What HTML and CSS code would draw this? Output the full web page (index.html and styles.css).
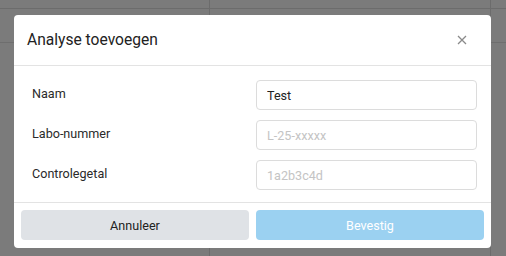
FILE: index.html
```html
<!DOCTYPE html>
<html lang="nl">
<head>
<meta charset="utf-8">
<title>Analyse toevoegen</title>
<link rel="stylesheet" href="styles.css">
</head>
<body>
<div class="backdrop">
  <div class="modal">
    <div class="modal-header">
      <h2 class="modal-title">Analyse toevoegen</h2>
      <button class="close" type="button" aria-label="Sluiten">
        <svg width="10" height="10" viewBox="0 0 10 10"><path d="M1 1L9 9M9 1L1 9" stroke="#8a8a8a" stroke-width="1.3" fill="none"/></svg>
      </button>
    </div>
    <div class="modal-body">
      <label class="label" for="naam">Naam</label>
      <input class="input" id="naam" type="text" value="Test">
      <label class="label" for="labo">Labo-nummer</label>
      <input class="input" id="labo" type="text" placeholder="L-25-xxxxx">
      <label class="label" for="ctrl">Controlegetal</label>
      <input class="input" id="ctrl" type="text" placeholder="1a2b3c4d">
    </div>
    <div class="modal-footer">
      <button class="btn btn-cancel" type="button">Annuleer</button>
      <button class="btn btn-confirm" type="button">Bevestig</button>
    </div>
  </div>
</div>
</body>
</html>
```

FILE: styles.css
```css
html, body {
  margin: 0;
  padding: 0;
}
body {
  width: 506px;
  height: 256px;
  overflow: hidden;
  font-family: Roboto, "Liberation Sans", sans-serif;
  background-color: #7b7b7b;
  background-image:
    linear-gradient(to bottom, transparent 8px, #6c6c6c 8px, #6c6c6c 9px, transparent 9px),
    linear-gradient(to bottom, transparent 42px, #6e6e6e 42px, #6e6e6e 43px, transparent 43px),
    linear-gradient(to right, transparent 209px, #6c6c6c 209px, #6c6c6c 210px, transparent 210px),
    linear-gradient(to right, transparent 490px, #6c6c6c 490px, #6c6c6c 491px, transparent 491px);
}
.backdrop {
  padding: 15px 15px 0 14px;
}
.modal {
  width: 477px;
  height: 233px;
  background: #fff;
  border-radius: 4px;
  display: flex;
  flex-direction: column;
  box-sizing: border-box;
}
.modal-header {
  height: 51px;
  box-sizing: border-box;
  border-bottom: 1px solid #e3e3e3;
  display: flex;
  align-items: center;
  justify-content: space-between;
  padding: 0 24px 0 13px;
}
.modal-title {
  margin: 0;
  font-size: 15.6px;
  font-weight: 400;
  color: #222;
}
.close {
  border: 0;
  background: none;
  padding: 0;
  width: 10px;
  height: 10px;
  display: flex;
}
.modal-body {
  height: 137px;
  box-sizing: border-box;
  padding: 14px 14px 13px 14px;
  display: grid;
  grid-template-columns: 221px 221px;
  column-gap: 7px;
  row-gap: 10px;
  grid-auto-rows: 30px;
  border-bottom: 1px solid #e3e3e3;
}
.label {
  font-size: 12.6px;
  color: #2a2a2a;
  display: flex;
  align-items: center;
  padding-left: 4px;
  margin-top: -4px;
}
.input {
  box-sizing: border-box;
  height: 30px;
  width: 221px;
  border: 1px solid #dcdcdc;
  border-radius: 4px;
  padding: 0 10px;
  font-family: inherit;
  font-size: 12.6px;
  color: #222;
  outline: none;
}
.input::placeholder {
  color: #c4c4c4;
}
.modal-footer {
  flex: 1;
  display: flex;
  gap: 7px;
  padding: 7px 7px 7px 7px;
  box-sizing: border-box;
}
.btn {
  flex: 1;
  height: 30px;
  border: 0;
  border-radius: 4px;
  font-family: inherit;
  font-size: 12.6px;
}
.btn-cancel {
  background: #dfe2e6;
  color: #222;
}
.btn-confirm {
  background: #9bd1f1;
  color: #fff;
}
```
